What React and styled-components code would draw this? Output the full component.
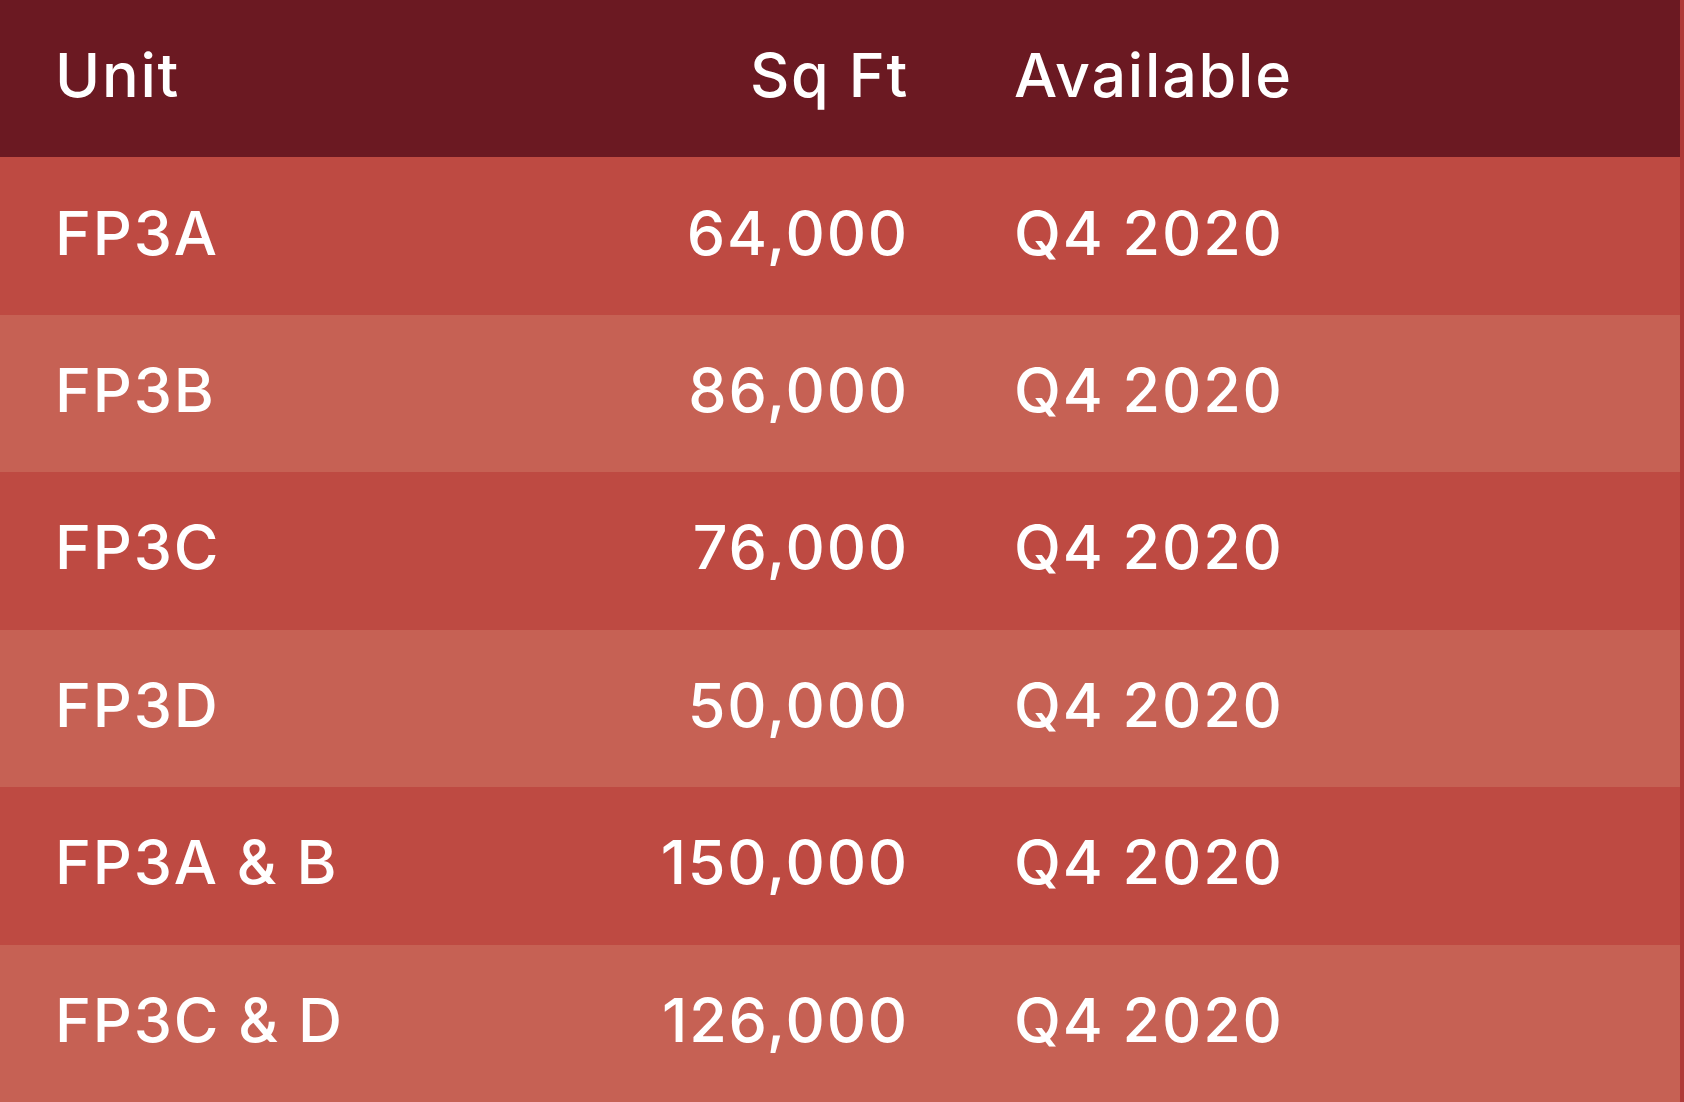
import React from 'react'
import styled, { createGlobalStyle } from 'styled-components'

const GlobalStyle = createGlobalStyle`
  html, body {
    margin: 0;
    padding: 0;
    background: #b03a38;
  }
`

const Table = styled.div`
  box-sizing: border-box;
  width: 100vw;
  height: 100vh;
  display: grid;
  grid-template-rows: repeat(7, 1fr);
  border-right: 4px solid #b03a38;
  font-family: Inter, "Liberation Sans", sans-serif;
  color: #fff;
`

const Row = styled.div`
  display: grid;
  grid-template-columns: 290px 455px 1fr;
  column-gap: 107px;
  align-items: center;
  padding-left: 55px;
  background-color: ${(p) => p.bg};
`

const Cell = styled.div`
  font-size: 61px;
  font-weight: 500;
  letter-spacing: 1.8px;
  line-height: 1;
  padding-bottom: 6px;
  text-align: ${(p) => (p.right ? 'right' : 'left')};
  margin-right: ${(p) => (p.right ? '-2px' : '0')};
  white-space: nowrap;
`

const rows = [
  ['FP3A', '64,000', 'Q4 2020'],
  ['FP3B', '86,000', 'Q4 2020'],
  ['FP3C', '76,000', 'Q4 2020'],
  ['FP3D', '50,000', 'Q4 2020'],
  ['FP3A & B', '150,000', 'Q4 2020'],
  ['FP3C & D', '126,000', 'Q4 2020'],
]

export default function App() {
  return (
    <>
      <GlobalStyle />
      <Table>
        <Row bg="#6b1922">
          <Cell>Unit</Cell>
          <Cell right>Sq Ft</Cell>
          <Cell>Available</Cell>
        </Row>
        {rows.map((r, i) => (
          <Row key={r[0]} bg={i % 2 === 0 ? '#be4a42' : '#c66154'}>
            <Cell>{r[0]}</Cell>
            <Cell right>{r[1]}</Cell>
            <Cell>{r[2]}</Cell>
          </Row>
        ))}
      </Table>
    </>
  )
}
